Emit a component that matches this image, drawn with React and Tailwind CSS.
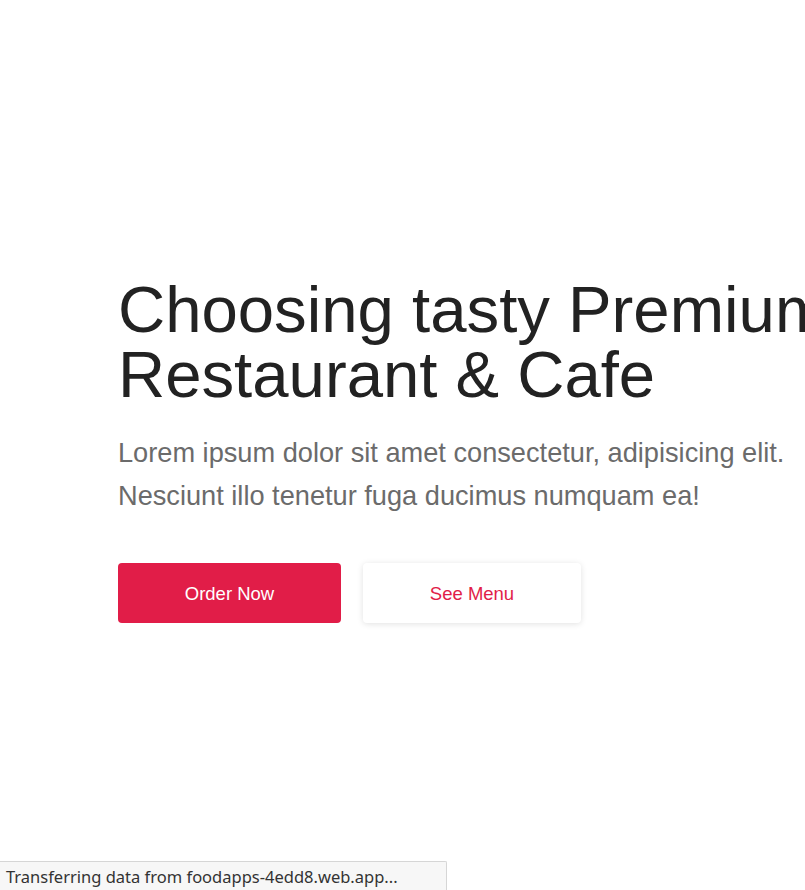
import React from 'react'

export default function App() {
  return (
    <div className="min-h-screen bg-white overflow-hidden font-['Liberation_Sans',Arial,sans-serif]">
      {/* Hero */}
      <section className="pt-[277px] pl-[118px]">
        <h1 className="text-[65.3px] leading-[65px] font-normal text-[#222222] whitespace-nowrap">
          Choosing tasty Premium
          <br />
          Restaurant &amp; Cafe
        </h1>
        <p className="mt-[24px] text-[27.2px] leading-[43.2px] text-[#6b6b6b] whitespace-nowrap">
          Lorem ipsum dolor sit amet consectetur, adipisicing elit.
          <br />
          Nesciunt illo tenetur fuga ducimus numquam ea!
        </p>
        <div className="mt-[46px] flex gap-[22px]">
          <button className="w-[223px] h-[60px] rounded-[4px] bg-[#e11d48] text-white text-[18.5px]">
            Order Now
          </button>
          <button className="w-[218px] h-[60px] rounded-[4px] bg-white text-[#e11d48] text-[18.5px] shadow-[0_1px_6px_rgba(0,0,0,0.12)]">
            See Menu
          </button>
        </div>
      </section>

      {/* Browser status bubble */}
      <div className="fixed left-0 bottom-0 w-[447px] h-[29px] bg-[#f7f7f7] border-t border-r border-[#d6d6d6] rounded-tr-[2px] flex items-center pl-[6px] pt-[2px] font-['Noto_Sans',sans-serif] text-[16.5px] text-[#333333]">
        Transferring data from foodapps-4edd8.web.app...
      </div>
    </div>
  )
}
